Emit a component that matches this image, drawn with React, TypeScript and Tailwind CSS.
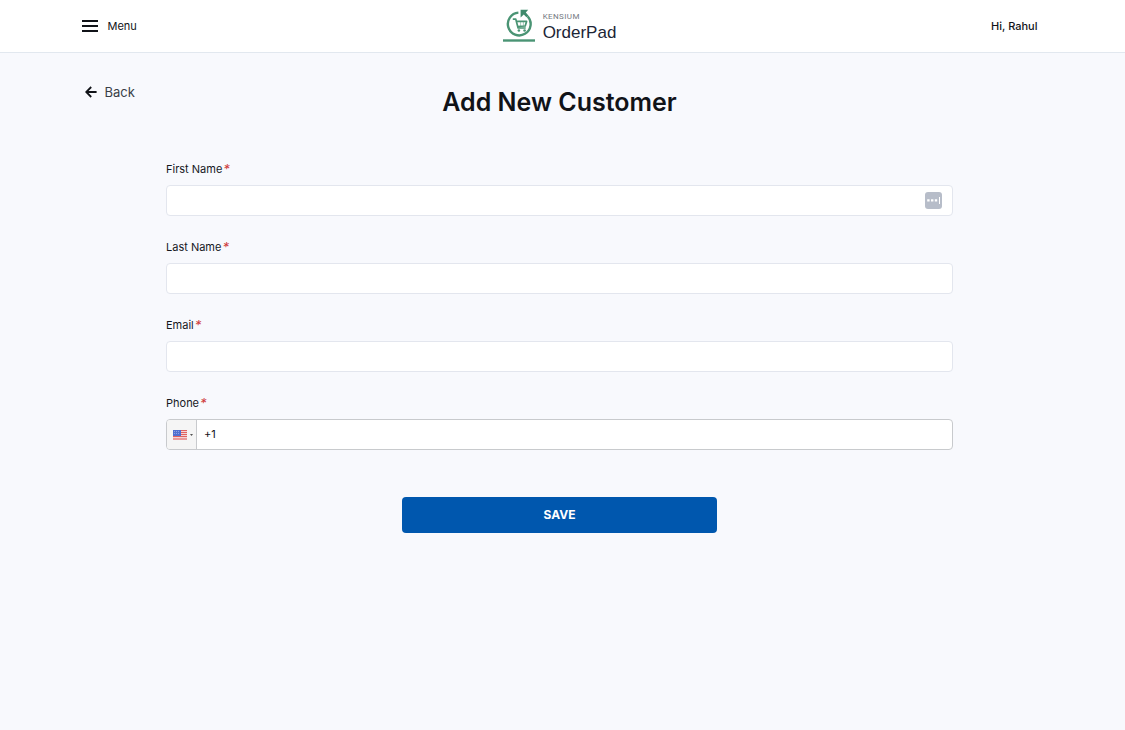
import type { ReactNode } from "react";

function Logo() {
  return (
    <a href="#home" aria-label="Kensium OrderPad" className="flex items-center gap-2">
      <svg viewBox="0 0 32 34" className="h-[34px] w-8" fill="none" aria-hidden="true">
        <path d="M15.4 3.6A11.4 11.4 0 1 0 24.6 7.2" stroke="#4a9474" strokeWidth="2.4" />
        <path d="M17.6 .8H25.2L22.8 3.4L25.4 6.4L23.4 8.2L20.8 5.4L17.6 8.6Z" fill="#3f8a6c" />
        <path d="M9.8 10.2h3l2.3 8.8h7.6M13.4 12.4h10.2l-1.4 4.6-7.4.5" stroke="#4a9474" strokeWidth="1.7" strokeLinejoin="round" />
        <path d="M17.6 12.6v4.4M20.4 12.6v4.4" stroke="#4a9474" strokeWidth="0.8" opacity="0.6" />
        <circle cx="15.9" cy="21.5" r="1.3" fill="#4a9474" />
        <circle cx="21.6" cy="21.5" r="1.3" fill="#4a9474" />
        <path d="M0 31.5h32" stroke="#4a9474" strokeWidth="2.4" />
      </svg>
      <span className="flex flex-col pt-[3px]">
        <span className="font-['Roboto',sans-serif] text-[8px] leading-[10px] tracking-wider text-[#74787f]">
          KENSIUM
        </span>
        <span className="font-['Liberation_Sans',sans-serif] text-[17px] leading-[22px] text-[#1c2536]">OrderPad</span>
      </span>
    </a>
  );
}

function UsFlag() {
  return (
    <svg viewBox="0 0 14 10" className="h-[10px] w-[14px]" aria-hidden="true">
      <rect width="14" height="10" fill="#f3d3d6" />
      <path d="M0 .5h14M0 2.5h14M0 4.5h14M0 6.5h14M0 9h14" stroke="#e0625f" strokeWidth="1.1" />
      <rect width="8" height="6" fill="#4f6fd0" />
      <path d="M1 1.5h6M1 3.5h6" stroke="#a9b8ea" strokeWidth="0.7" strokeDasharray="1 1" />
    </svg>
  );
}

function Field({ id, label, children }: { id: string; label: string; children: ReactNode }) {
  return (
    <div>
      <label htmlFor={id} className="flex gap-px text-[11px] leading-4 text-[#16181d]">
        {label}
        <span className="text-[13px] leading-4 text-[#cf3a3a] italic">*</span>
      </label>
      {children}
    </div>
  );
}

const inputClass =
  "mt-2 block h-[31px] w-full rounded border border-[#e3e6ee] bg-white px-2 text-[11px] text-[#16181d] outline-none focus:border-[#0057ae]";

export default function App() {
  return (
    <div className="min-h-screen bg-[#f8f9fd] font-['Inter',sans-serif] text-[#111318]">
      <header className="border-b border-[#e2e8ef] bg-white pr-1.5">
        <div className="mx-auto grid h-[52px] max-w-[956px] grid-cols-3 items-center">
          <button type="button" className="flex items-center gap-[10px] justify-self-start text-[11px] leading-4">
            <svg viewBox="0 0 16 12" className="h-3 w-4" fill="#111318" aria-hidden="true">
              <path d="M0 0h16v2H0zM0 5h16v2H0zM0 10h16v2H0z" />
            </svg>
            Menu
          </button>
          <div className="justify-self-center">
            <Logo />
          </div>
          <span className="justify-self-end text-[11px] leading-4 font-medium">Hi, Rahul</span>
        </div>
      </header>

      <main className="pt-[31px] pr-1.5">
        <div className="mx-auto grid max-w-[956px] grid-cols-[1fr_auto_1fr] items-start">
          <a href="#back" className="ml-[3px] flex items-center gap-2 justify-self-start text-[13px] leading-4 text-[#3a3f48]">
            <svg viewBox="0 0 12 12" className="h-3 w-3" fill="none" aria-hidden="true">
              <path d="M11.6 6H1.4M6.2 1L1.2 6l5 5" stroke="#111318" strokeWidth="1.8" />
            </svg>
            Back
          </a>
          <h1 className="mt-0.5 text-center text-[25px] leading-8 font-semibold">Add New Customer</h1>
        </div>

        <form className="mx-auto mt-[43px] flex max-w-[787px] flex-col gap-[23px]" onSubmit={(e) => e.preventDefault()}>
          <Field id="first-name" label="First Name">
            <div className="relative">
              <input id="first-name" type="text" className={inputClass} />
              <button
                type="button"
                aria-label="Fill from saved details"
                className="absolute top-[7px] right-[11px] flex h-[17px] w-[17px] items-center justify-center rounded-[3px] bg-[#b7bdc9]"
              >
                <svg viewBox="0 0 17 17" className="h-[17px] w-[17px]" fill="#ffffff" aria-hidden="true">
                  <path d="M2.2 7.2h2.4v2.4H2.2zM6 7.2h2.4v2.4H6zM9.8 7.2h2.4v2.4H9.8zM14 5h1v7h-1z" />
                </svg>
              </button>
            </div>
          </Field>
          <Field id="last-name" label="Last Name">
            <input id="last-name" type="text" className={inputClass} />
          </Field>
          <Field id="email" label="Email">
            <input id="email" type="email" className={inputClass} />
          </Field>
          <Field id="phone" label="Phone">
            <div className="mt-2 flex h-[31px] overflow-hidden rounded border border-[#c8cacd] bg-white">
              <div className="relative flex w-[30px] items-center gap-[3px] border-r border-[#c8cacd] bg-[#f5f5f5] pl-1.5">
                <UsFlag />
                <svg viewBox="0 0 3 2" className="h-0.5 w-[3px]" fill="#555555" aria-hidden="true">
                  <path d="M0 0h3L1.5 2z" />
                </svg>
                <select aria-label="Country code" className="absolute inset-0 w-full cursor-pointer opacity-0">
                  <option>US</option>
                </select>
              </div>
              <input id="phone" type="tel" defaultValue="+1" className="min-w-0 flex-1 px-[7px] text-[11px] outline-none" />
            </div>
          </Field>
          <button
            type="submit"
            className="mt-6 h-9 w-2/5 self-center rounded bg-[#0057ae] text-[12px] leading-4 font-bold text-white"
          >
            SAVE
          </button>
        </form>
      </main>
    </div>
  );
}
